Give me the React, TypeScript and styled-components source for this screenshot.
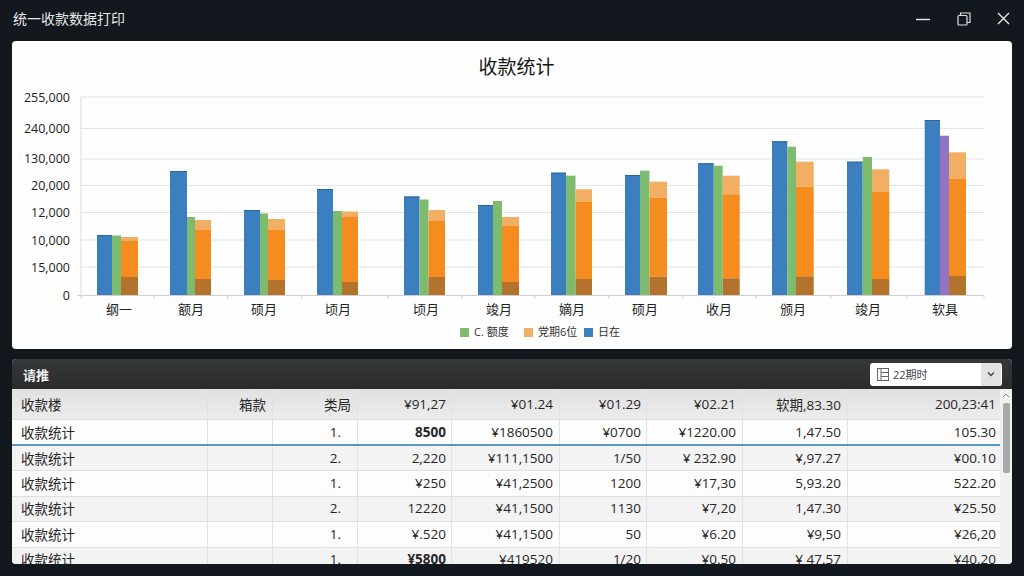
import React from "react";
import styled, { createGlobalStyle } from "styled-components";

const FONT = `"Open Sans", "Noto Sans CJK SC", sans-serif`;

const Global = createGlobalStyle`
  html, body { margin: 0; padding: 0; background: #13171e; }
  body { font-family: ${FONT}; }
`;

const Win = styled.div`
  width: 1024px;
  height: 576px;
  overflow: hidden;
  background: #13171e;
  display: flex;
  flex-direction: column;
`;
const TitleBar = styled.header`
  height: 41px;
  flex: none;
  display: flex;
  align-items: center;
  justify-content: space-between;
  padding: 0 14px 4px 13px;
  box-sizing: border-box;
  color: #e6e6e6;
`;
const WinTitle = styled.div`
  font-size: 14px;
  line-height: 20px;
`;
const WinControls = styled.div`
  display: flex;
  align-items: center;
  gap: 26px;
`;
const ChartCard = styled.section`
  height: 308px;
  flex: none;
  margin: 0 12px;
  background: #fefefe;
  border-radius: 4px;
  display: flex;
  flex-direction: column;
  color: #222;
`;
const ChartTitle = styled.h1`
  margin: 0;
  padding: 12px 0 4px 9px;
  height: 28px;
  font-size: 19px;
  line-height: 28px;
  font-weight: 400;
  text-align: center;
  color: #151515;
`;
const Plot = styled.svg`
  display: block;
  width: 1000px;
  height: 240px;
  flex: none;
`;
const Legend = styled.div`
  display: flex;
  align-items: center;
  padding-left: 448px;
  height: 16px;
  margin-top: -1px;
`;
const LegendItem = styled.div<{ $w: number }>`
  display: flex;
  align-items: center;
  gap: 5px;
  width: ${(p) => p.$w}px;
  font-size: 11px;
  line-height: 16px;
  color: #333;
`;
const Swatch = styled.i<{ $c: string }>`
  display: block;
  width: 9px;
  height: 9px;
  background: ${(p) => p.$c};
`;
const Panel = styled.section`
  margin: 10px 12px 0;
  height: 205px;
  flex: none;
  border-radius: 4px;
  overflow: hidden;
  background: #f2f2f2;
  display: flex;
  flex-direction: column;
`;
const PanelHead = styled.div`
  height: 30px;
  flex: none;
  box-sizing: border-box;
  background: linear-gradient(#36383a, #2a2b2d);
  display: flex;
  align-items: center;
  justify-content: space-between;
  padding: 0 10px 0 11px;
`;
const PanelTitle = styled.div`
  color: #f0f0f0;
  font-size: 13px;
  font-weight: 700;
`;
const Select = styled.div`
  width: 132px;
  height: 23px;
  background: #fff;
  border-radius: 3px;
  display: flex;
  align-items: center;
  overflow: hidden;
  color: #444;
  font-size: 11px;
`;
const SelectText = styled.div`
  flex: 1;
  display: flex;
  align-items: center;
  gap: 4px;
  padding-left: 7px;
`;
const SelectBtn = styled.div`
  width: 20px;
  height: 100%;
  margin-right: 1px;
  background: #e2e2e2;
  display: flex;
  align-items: center;
  justify-content: center;
`;
const TableWrap = styled.div`
  flex: 1;
  display: flex;
  min-height: 0;
`;
const Table = styled.div`
  width: 988px;
  flex: none;
`;
const Row = styled.div<{ $kind: "head" | "odd" | "even"; $mark?: boolean }>`
  display: grid;
  grid-template-columns: 195.5px 65.5px 85px 94px 108px 87px 96px 105px 152px;
  box-sizing: border-box;
  height: ${(p) => (p.$kind === "head" ? "31px" : p.$mark ? "26px" : "25.4px")};
  background: ${(p) =>
    p.$kind === "head"
      ? "linear-gradient(#e1e1e1, #ececec)"
      : p.$kind === "even"
        ? "#f3f3f3"
        : "#fdfdfd"};
  border-bottom: ${(p) => (p.$mark ? "2px solid #5c97bd" : "1px solid #e0e0e0")};
`;
const Cell = styled.div<{ $left?: boolean; $pad?: number; $strong?: boolean }>`
  border-right: 1px solid #e2e2e2;
  display: flex;
  align-items: center;
  justify-content: ${(p) => (p.$left ? "flex-start" : "flex-end")};
  padding: ${(p) => (p.$left ? "0 0 1px 9px" : `0 ${p.$pad ?? 5}px 1px 0`)};
  font-size: 13.5px;
  font-weight: ${(p) => (p.$strong ? 700 : 400)};
  color: #262626;
  white-space: nowrap;
  overflow: hidden;
  &:last-child { border-right: none; }
`;
const Scrollbar = styled.div`
  width: 12px;
  flex: none;
  background: #f1f1f1;
  position: relative;
  display: flex;
  justify-content: center;
  padding-top: 14px;
  box-sizing: border-box;
`;
const ScrollUp = styled.svg`
  position: absolute;
  top: 4px;
  left: 2px;
`;
const Thumb = styled.div`
  width: 7px;
  height: 70px;
  background: #a9a9a9;
  border-radius: 2px;
`;

const bars = [
  [97, 112, 121, 138, 235, 235.5, 237, 241, 277],
  [170, 187, 195, 211, 171, 217, 220, 230, 279],
  [244, 260, 268, 285, 210, 213.5, 219, 230, 280],
  [317, 333, 342, 358, 189, 211, 211.5, 217, 282],
  [404, 419.5, 428.5, 445, 196.5, 199.5, 210, 221, 277],
  [478, 493, 502, 519, 205, 201, 217, 226, 282],
  [551, 566, 575.5, 592, 172.7, 175.7, 189.3, 201.7, 279],
  [625, 640, 649.5, 667, 175, 170.7, 181.7, 197.7, 276.7],
  [698, 713.7, 722.7, 739.7, 163.3, 165.7, 175.7, 194.3, 278.3],
  [772, 787.3, 796, 813.7, 141.3, 146.7, 161.7, 186.7, 276.3],
  [847, 862.7, 872, 889.3, 161.7, 157, 169.3, 192, 279],
  [924.7, 940, 949, 966, 120, 135.7, 152.3, 179, 276],
];
const BASE = 295;
const grid = [97, 128.5, 159, 185.5, 212.5, 240, 267];
const yLabels: [string, number][] = [
  ["255,000", 97], ["240,000", 128.5], ["130,000", 158], ["20,000", 185.5],
  ["12,000", 212.5], ["10,000", 240], ["15,000", 267], ["0", 295],
];
const ticks = [81, 154, 227.7, 301.7, 388, 462, 534.7, 608.7, 683, 756, 831, 907, 984];
const xLabels: [string, number][] = [
  ["纲一", 119], ["额月", 191], ["硕月", 264], ["顷月", 338], ["顷月", 426], ["竣月", 499],
  ["嫡月", 572], ["硕月", 645], ["收月", 719], ["颁月", 793], ["竣月", 868], ["软具", 945],
];

const COLS_PAD = [0, 6, 16, 5, 6, 5, 6, 6, 4];
const head = ["收款楼", "箱款", "类局", "¥91,27", "¥01.24", "¥01.29", "¥02.21", "软期,83.30", "200,23:41"];
const rows: string[][] = [
  ["收款统计", "", "1.", "8500", "¥1860500", "¥0700", "¥1220.00", "1,47.50", "105.30"],
  ["收款统计", "", "2.", "2,220", "¥111,1500", "1/50", "¥ 232.90", "¥,97.27", "¥00.10"],
  ["收款统计", "", "1.", "¥250", "¥41,2500", "1200", "¥17,30", "5,93.20", "522.20"],
  ["收款统计", "", "2.", "12220", "¥41,1500", "1130", "¥7,20", "1,47.30", "¥25.50"],
  ["收款统计", "", "1.", "¥.520", "¥41,1500", "50", "¥6.20", "¥9,50", "¥26,20"],
  ["收款统计", "", "1.", "¥5800", "¥419520", "1/20", "¥0.50", "¥ 47.57", "¥40.20"],
];

function Chart() {
  return (
    <Plot viewBox="12 85 1000 240">
      {grid.map((y) => (
        <line key={y} x1={81} x2={984} y1={y} y2={y} stroke="#e4e4e4" strokeWidth={1} />
      ))}
      <line x1={81} x2={81} y1={97} y2={295} stroke="#dcdcdc" />
      <line x1={77} x2={984} y1={295.5} y2={295.5} stroke="#cfcfcf" />
      {ticks.map((x) => (
        <line key={x} x1={x} x2={x} y1={295} y2={299} stroke="#d0d0d0" />
      ))}
      {yLabels.map(([t, y]) => (
        <text key={t} x={70} y={y + 4.5} textAnchor="end" fontSize={12.5} fill="#222" fontFamily={FONT}>{t}</text>
      ))}
      {bars.map(([a, b, c, d, blue, green, light, mid, dark], i) => (
        <g key={i}>
          <rect x={a} y={blue} width={b - a} height={BASE - blue} fill="#3b7fc0" />
          <rect x={a} y={blue} width={b - a} height={1} fill="#2c659c" />
          <rect x={b} y={green} width={c - b} height={BASE - green} fill={i === 11 ? "#9273c6" : "#7dbb6e"} />
          <rect x={c} y={light} width={d - c} height={mid - light} fill="#f2ae62" />
          <rect x={c} y={mid} width={d - c} height={dark - mid} fill="#f58c20" />
          <rect x={c} y={dark} width={d - c} height={BASE - dark} fill="#b3732c" />
        </g>
      ))}
      {xLabels.map(([t, x], i) => (
        <text key={i} x={x} y={314} textAnchor="middle" fontSize={13} fill="#222" fontFamily={FONT}>{t}</text>
      ))}
    </Plot>
  );
}

export default function App() {
  return (
    <Win>
      <Global />
      <TitleBar>
        <WinTitle>统一收款数据打印</WinTitle>
        <WinControls>
          <svg width="16" height="16" viewBox="0 0 16 16"><path d="M1 8.5h14" stroke="#e8e8e8" strokeWidth="1.4" /></svg>
          <svg width="14" height="14" viewBox="0 0 14 14" fill="none" stroke="#dcdcdc" strokeWidth="1.2"><rect x="1" y="3.5" width="9" height="9.5" rx="1" /><path d="M3.5 3.5V1h9.5v9.5H10" /></svg>
          <svg width="13" height="13" viewBox="0 0 13 13"><path d="M1 1l11 11M12 1L1 12" stroke="#e8e8e8" strokeWidth="1.4" /></svg>
        </WinControls>
      </TitleBar>
      <ChartCard>
        <ChartTitle>收款统计</ChartTitle>
        <Chart />
        <Legend>
          <LegendItem $w={64}><Swatch $c="#7dbb6e" />C. 额度</LegendItem>
          <LegendItem $w={60}><Swatch $c="#f2ae62" />党期6位</LegendItem>
          <LegendItem $w={50}><Swatch $c="#3b7fc0" />日在</LegendItem>
        </Legend>
      </ChartCard>
      <Panel>
        <PanelHead>
          <PanelTitle>请推</PanelTitle>
          <Select>
            <SelectText>
              <svg width="12" height="13" viewBox="0 0 12 13" fill="none" stroke="#666"><rect x="0.5" y="0.5" width="11" height="12" /><path d="M4 .5v12M4 4.5h7.5M4 8.5h7.5" /></svg>
              22期时
            </SelectText>
            <SelectBtn>
              <svg width="8" height="6" viewBox="0 0 8 6" fill="none"><path d="M1 1.5l3 3 3-3" stroke="#444" strokeWidth="1.4" /></svg>
            </SelectBtn>
          </Select>
        </PanelHead>
        <TableWrap>
          <Table>
            <Row $kind="head">
              {head.map((t, i) => (
                <Cell key={i} $left={i === 0} $pad={i === 2 ? 6 : COLS_PAD[i]}>{t}</Cell>
              ))}
            </Row>
            {rows.map((r, ri) => (
              <Row key={ri} $kind={ri % 2 ? "even" : "odd"} $mark={ri === 0}>
                {r.map((t, i) => (
                  <Cell key={i} $left={i === 0} $pad={COLS_PAD[i]} $strong={i === 3 && (ri === 0 || ri === 5)}>{t}</Cell>
                ))}
              </Row>
            ))}
          </Table>
          <Scrollbar>
            <ScrollUp width="8" height="5" viewBox="0 0 8 5" fill="none"><path d="M1 4l3-3 3 3" stroke="#888" /></ScrollUp>
            <Thumb />
          </Scrollbar>
        </TableWrap>
      </Panel>
    </Win>
  );
}
